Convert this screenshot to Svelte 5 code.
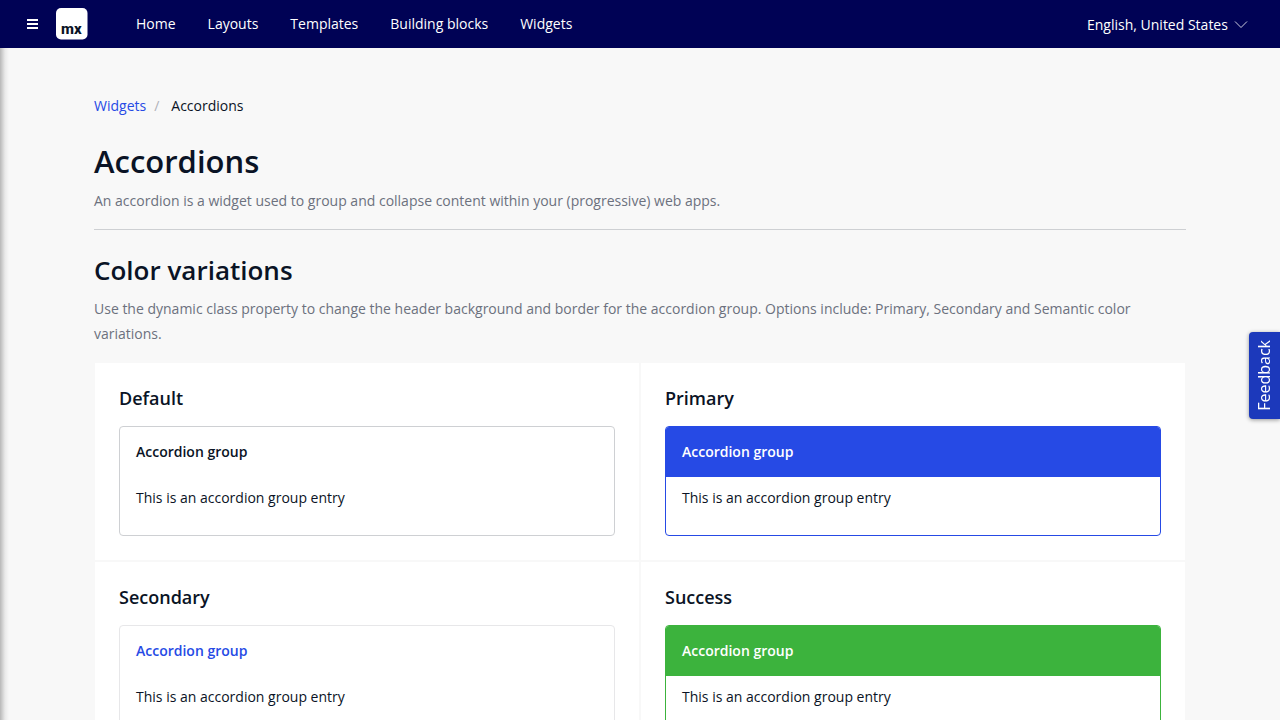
<script>
  const links = ['Home', 'Layouts', 'Templates', 'Building blocks', 'Widgets'];
  let groups = $state([
    { title: 'Default', kind: 'default', open: true },
    { title: 'Primary', kind: 'primary', open: true },
    { title: 'Secondary', kind: 'secondary', open: true },
    { title: 'Success', kind: 'success', open: true }
  ]);
</script>

<div class="page">
  <header class="topbar">
    <button class="toggle" aria-label="Toggle sidebar">
      <svg width="12" height="12" viewBox="0 0 12 12" fill="currentColor" aria-hidden="true">
        <rect x="1" y="1" width="11" height="2" />
        <rect x="1" y="5" width="11" height="2" />
        <rect x="1" y="9" width="11" height="2" />
      </svg>
    </button>
    <a class="logo" href="#home" aria-label="Home page">
      <svg width="32" height="32" viewBox="0 0 32 32" aria-hidden="true">
        <rect width="31.5" height="31.5" rx="5" fill="#fff" />
        <text x="5" y="25.5" font-family="Roboto, sans-serif" font-weight="800" font-size="15" fill="#0a1325">mx</text>
      </svg>
    </a>
    <nav aria-label="Main">
      {#each links as link}
        <a href="#{link.toLowerCase().replace(' ', '-')}">{link}</a>
      {/each}
    </nav>
    <div class="language">
      <select aria-label="Language">
        <option>English, United States</option>
      </select>
      <svg width="14" height="14" viewBox="0 0 14 14" fill="none" stroke="currentColor" stroke-width="0.8" aria-hidden="true">
        <path d="M1 4.5 L7 10.5 L13 4.5" />
      </svg>
    </div>
  </header>

  <main>
    <div class="container">
      <nav class="breadcrumb" aria-label="Breadcrumb">
        <a href="#widgets">Widgets</a>
        <span class="slash">/</span>
        <span>Accordions</span>
      </nav>

      <div class="intro">
        <h1>Accordions</h1>
        <p>An accordion is a widget used to group and collapse content within your (progressive) web apps.</p>
      </div>

      <section>
        <h2>Color variations</h2>
        <p>Use the dynamic class property to change the header background and border for the accordion group. Options include: Primary, Secondary and Semantic color variations.</p>
        <div class="grid">
          {#each groups as group}
            <article class="card">
              <h3>{group.title}</h3>
              <div class="accordion {group.kind}">
                <button aria-expanded={group.open} onclick={() => (group.open = !group.open)}>Accordion group</button>
                {#if group.open}
                  <div class="entry">This is an accordion group entry</div>
                {/if}
              </div>
            </article>
          {/each}
        </div>
      </section>
    </div>
  </main>

  <button class="feedback"><span>Feedback</span></button>
</div>

<style>
  :global(body) {
    margin: 0;
    background: #f8f8f8;
  }
  .page {
    display: flex;
    flex-direction: column;
    height: 100vh;
    overflow: hidden;
    color: #0a1325;
    font: 14px/20px "Open Sans", sans-serif;
  }
  * {
    box-sizing: border-box;
  }
  a {
    color: inherit;
    text-decoration: none;
  }
  button,
  select {
    margin: 0;
    border: 0;
    background: none;
    color: inherit;
    font: inherit;
    cursor: pointer;
  }
  h1,
  h2,
  h3,
  p {
    margin: 0;
  }

  .topbar {
    display: flex;
    flex: none;
    align-items: center;
    height: 48px;
    padding: 0 32px 0 26px;
    background: #000255;
    color: #fff;
  }
  .toggle {
    display: flex;
    padding: 0;
  }
  .logo {
    display: flex;
    margin-left: 18px;
  }
  .topbar nav {
    display: flex;
    gap: 32px;
    margin-left: 48px;
  }
  .language {
    position: relative;
    display: flex;
    align-items: center;
    margin-left: auto;
  }
  .language select {
    appearance: none;
    padding: 2px 20px 0 0;
  }
  .language option {
    color: #0a1325;
  }
  .language svg {
    position: absolute;
    right: 0;
    pointer-events: none;
  }

  main {
    flex: 1;
    min-height: 0;
    overflow-y: auto;
    scrollbar-width: none;
    background: linear-gradient(to right, rgba(0, 0, 0, 0.26), rgba(0, 0, 0, 0.06) 5px, transparent 9px) #f8f8f8;
  }
  .container {
    max-width: 1156px;
    margin: 0 auto;
    padding: 48px 32px;
  }
  .breadcrumb {
    display: flex;
  }
  .breadcrumb a {
    color: #264ae5;
  }
  .slash {
    margin: 0 12px 0 8px;
    color: #b0b2b8;
  }
  .intro {
    margin-bottom: 20px;
    padding: 24px 0 16px;
    border-bottom: 1px solid #ced0d3;
  }
  h1 {
    margin-bottom: 6px;
    font-size: 31px;
    font-weight: 600;
    line-height: 42px;
  }
  h2 {
    margin-bottom: 6px;
    font-size: 26px;
    font-weight: 600;
    line-height: 40px;
  }
  p {
    color: #6c717e;
    line-height: 25px;
  }
  .grid {
    display: grid;
    grid-template-columns: 1fr 1fr;
    gap: 2px;
    margin: 17px 1px 0;
  }
  .card {
    padding: 24px;
    background: #fff;
  }
  h3 {
    margin-bottom: 16px;
    font-size: 18px;
    font-weight: 600;
    line-height: 23px;
  }
  .accordion {
    overflow: hidden;
    border: 1px solid #ced0d3;
    border-radius: 4px;
  }
  .accordion button {
    display: block;
    width: 100%;
    padding: 15px 16px;
    font-weight: 600;
    text-align: left;
  }
  .entry {
    padding: 11px 16px 27px;
  }
  .primary {
    border-color: #264ae5;
  }
  .primary button {
    background: #264ae5;
    color: #fff;
  }
  .secondary {
    border-color: #e7e7e9;
  }
  .secondary button {
    color: #264ae5;
  }
  .success {
    border-color: #3cb33d;
  }
  .success button {
    background: #3cb33d;
    color: #fff;
  }

  .feedback {
    position: fixed;
    top: 332px;
    right: 0;
    height: 87px;
    padding: 0 4px;
    border-radius: 4px 0 0 4px;
    background: #1c39bb;
    box-shadow: 0 1px 4px rgba(0, 0, 0, 0.4);
    color: #fff;
    font-size: 16px;
    line-height: 23px;
  }
  .feedback span {
    display: block;
    writing-mode: vertical-rl;
    transform: rotate(180deg);
  }
</style>
